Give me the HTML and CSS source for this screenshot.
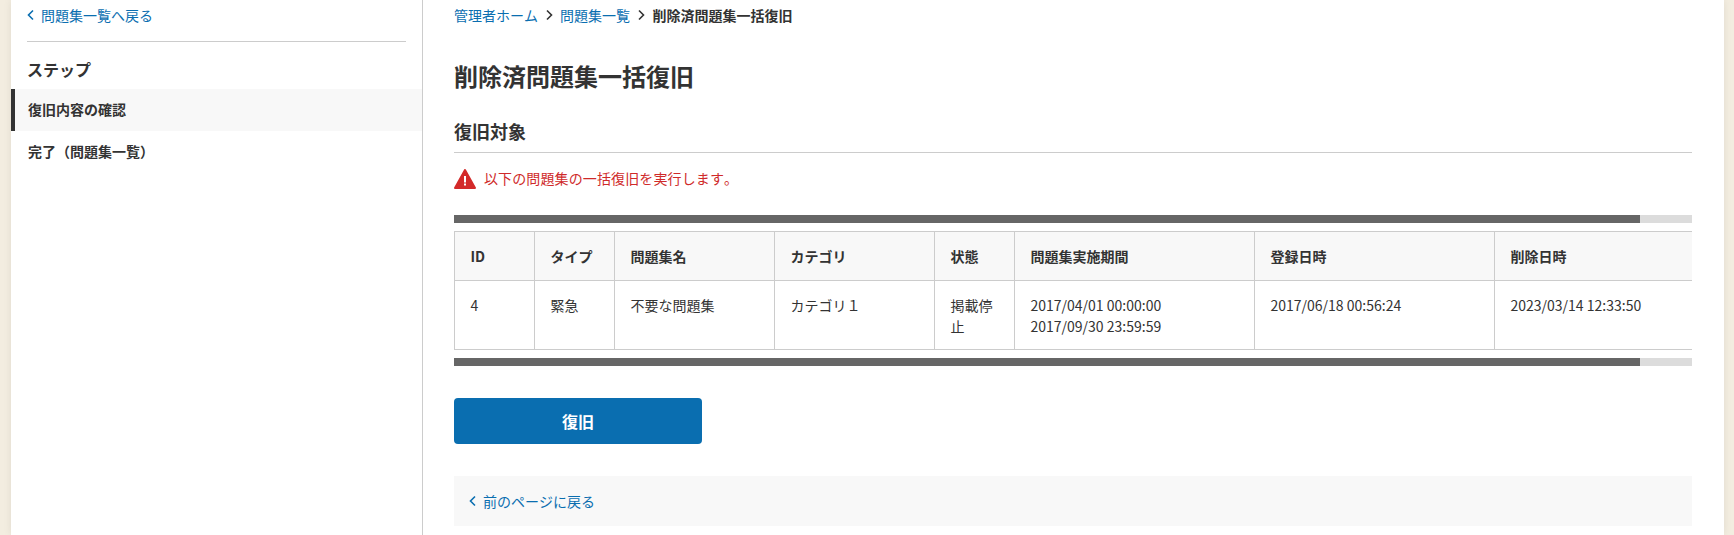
FILE: index.html
```html
<!DOCTYPE html>
<html lang="ja">
<head>
<meta charset="utf-8">
<title>削除済問題集一括復旧</title>
<link rel="stylesheet" href="styles.css">
</head>
<body>
<div class="panel">
  <aside class="side">
    <a class="back" href="#"><svg class="chev" viewBox="0 0 8 12"><path d="M6 1.5 1.5 6 6 10.5"/></svg>問題集一覧へ戻る</a>
    <hr class="side-rule">
    <div class="side-title">ステップ</div>
    <div class="step current">復旧内容の確認</div>
    <div class="step">完了（問題集一覧）</div>
  </aside>
  <main class="main">
    <nav class="crumbs">
      <a href="#">管理者ホーム</a>
      <svg class="sep" viewBox="0 0 8 12"><path d="M2 1.5 6.5 6 2 10.5"/></svg>
      <a href="#">問題集一覧</a>
      <svg class="sep" viewBox="0 0 8 12"><path d="M2 1.5 6.5 6 2 10.5"/></svg>
      <strong>削除済問題集一括復旧</strong>
    </nav>
    <h1 class="title">削除済問題集一括復旧</h1>
    <h2 class="subtitle">復旧対象</h2>
    <p class="warn">
      <svg class="warn-icon" viewBox="0 0 22 20"><path class="warn-tri" d="M11 1 21 19H1Z"/><rect class="warn-mark" x="10" y="7" width="2" height="6.5"/><rect class="warn-mark" x="10" y="14.5" width="2" height="2"/></svg>
      以下の問題集の一括復旧を実行します。
    </p>
    <div class="bar bar-top"><div class="thumb"></div></div>
    <div class="table-wrap">
      <table class="grid">
        <colgroup>
          <col class="c80"><col class="c80"><col class="c160"><col class="c160"><col class="c80"><col class="c240"><col class="c240"><col class="c252">
        </colgroup>
        <thead>
          <tr><th>ID</th><th>タイプ</th><th>問題集名</th><th>カテゴリ</th><th>状態</th><th>問題集実施期間</th><th>登録日時</th><th>削除日時</th></tr>
        </thead>
        <tbody>
          <tr><td>4</td><td>緊急</td><td>不要な問題集</td><td>カテゴリ１</td><td>掲載停止</td><td>2017/04/01 00:00:00<br>2017/09/30 23:59:59</td><td>2017/06/18 00:56:24</td><td>2023/03/14 12:33:50</td></tr>
        </tbody>
      </table>
    </div>
    <div class="bar bar-bottom"><div class="thumb"></div></div>
    <button class="primary" type="button">復旧</button>
    <div class="foot"><a class="back" href="#"><svg class="chev" viewBox="0 0 8 12"><path d="M6 1.5 1.5 6 6 10.5"/></svg>前のページに戻る</a></div>
  </main>
</div>
</body>
</html>
```
FILE: styles.css
```css
* { box-sizing: border-box; }
html, body { margin: 0; height: 100%; overflow: hidden; }
body {
  background: #f3ede0;
  color: #333;
  font-family: "Noto Sans CJK JP", "Noto Sans", sans-serif;
  font-size: 14px;
  font-kerning: none;
  padding: 0 10px 0 11px;
}
a { color: #0a6eb0; text-decoration: none; }
.panel {
  display: grid;
  grid-template-columns: 412px 1fr;
  background: #fff;
  min-height: 100%;
  box-shadow: 0 0 8px rgba(0, 0, 0, .08);
}
.side { border-right: 1px solid #ccc; min-width: 0; }
.side > .back { margin-left: 16px; height: 30px; }
.back { display: inline-flex; align-items: center; line-height: 20px; }
.chev { width: 8px; height: 12px; margin-right: 6px; }
.chev path, .sep path { fill: none; stroke-width: 1.6; }
.chev path { stroke: #0a6eb0; }
.side-rule { border: 0; border-top: 1px solid #ccc; margin: 11px 16px 0; }
.side-title { font-size: 16px; font-weight: 700; line-height: 24px; margin: 15px 0 8px 16px; }
.step { height: 42px; line-height: 40px; padding-left: 17px; font-weight: 700; }
.step.current { background: #f8f8f8; border-left: 4px solid #333; padding-left: 13px; }
.main { padding: 0 32px 0 31px; min-width: 0; }
.crumbs { height: 30px; display: flex; align-items: center; gap: 6px; }
.crumbs strong { font-weight: 700; margin-left: .6px; }
.sep { width: 8px; height: 12px; margin: 0 1px; }
.sep path { stroke: #333; }
.title { font-size: 24px; line-height: 36px; font-weight: 700; margin: 28px 0 0; }
.subtitle { font-size: 18px; line-height: 26px; font-weight: 700; margin: 24px 0 0; padding-bottom: 8px; border-bottom: 1px solid #ccc; }
.warn { display: flex; align-items: flex-start; gap: 8px; height: 20px; line-height: 19px; margin: 16px 0 0; color: #cf2a2a; letter-spacing: .12px; }
.warn-icon { width: 22px; height: 20px; }
.warn-tri { fill: #d32a2a; stroke: #d32a2a; stroke-width: 2; stroke-linejoin: round; }
.warn-mark { fill: #fff; }
.bar { height: 8px; background: #dcdcdc; }
.thumb { height: 8px; width: 1186px; background: #666; }
.bar-top { margin-top: 26px; }
.bar-bottom { margin-top: 8px; }
.table-wrap { margin-top: 8px; overflow: hidden; }
.grid { border-collapse: collapse; table-layout: fixed; width: 1292px; }
.c80 { width: 80px; }
.c160 { width: 160px; }
.c240 { width: 240px; }
.c252 { width: 252px; }
.grid th, .grid td { border: 1px solid #ccc; padding: 0 15.5px; text-align: left; vertical-align: top; }
.grid th { background: #f8f8f8; font-weight: 700; height: 49px; line-height: 21px; vertical-align: middle; }
.grid td { padding-top: 14px; padding-bottom: 12px; line-height: 21px; }
.primary {
  display: block; width: 248px; height: 46px; margin-top: 32px;
  background: #0a6eb0; color: #fff; border: 0; border-radius: 4px;
  font: 700 16px "Noto Sans CJK JP", sans-serif;
}
.foot { margin-top: 32px; height: 50px; background: #f8f8f8; display: flex; align-items: center; padding-left: 15px; }
```
